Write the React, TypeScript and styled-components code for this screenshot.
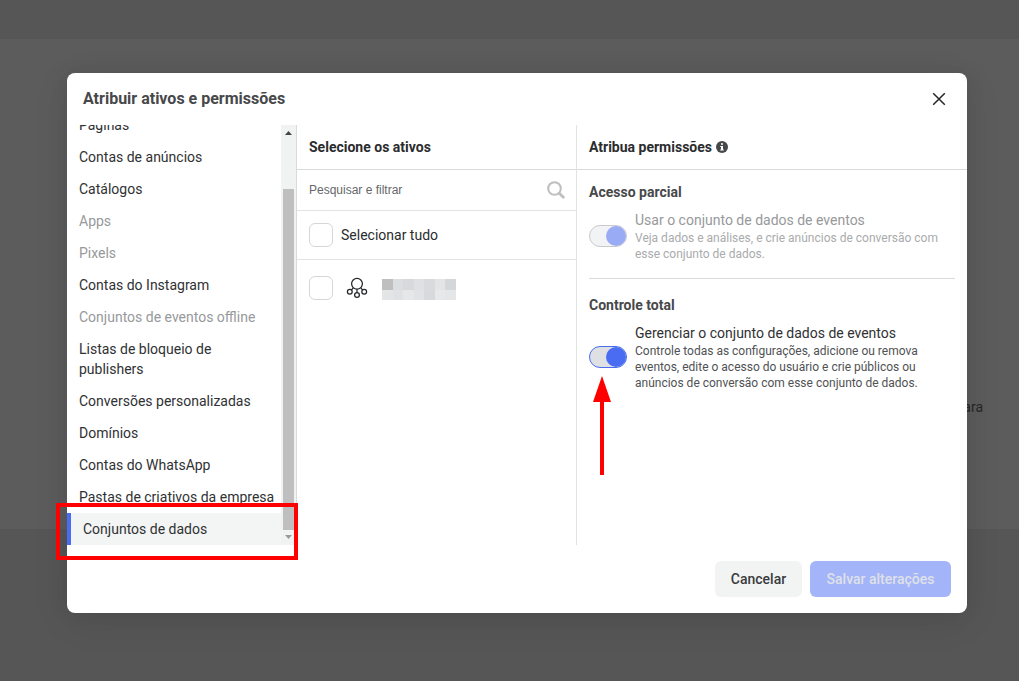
import React from 'react';
import styled, { createGlobalStyle } from 'styled-components';

const GlobalStyle = createGlobalStyle`
  *, *::before, *::after { box-sizing: border-box; }
  body {
    margin: 0;
    font-family: Roboto, "Liberation Sans", sans-serif;
    font-size: 14px;
    line-height: 20px;
    color: #2b2c2e;
    overflow: hidden;
  }
  h1, h2, h3, p, ul { margin: 0; padding: 0; }
`;

const Page = styled.div`
  position: relative;
  height: 681px;
  display: flex;
  flex-direction: column;
  background: #565656;
`;

const Backdrop = styled.div`
  margin-top: 39px;
  height: 490px;
  padding: 358px 36px 0 0;
  background: #5c5c5c;
  color: #262626;
  text-align: right;
`;

const Modal = styled.section`
  position: absolute;
  left: 67px;
  top: 73px;
  width: 900px;
  height: 540px;
  display: flex;
  flex-direction: column;
  background: #fff;
  border-radius: 8px;
  box-shadow: 0 8px 40px rgba(0, 0, 0, 0.07), 0 2px 20px rgba(0, 0, 0, 0.07);
`;

const ModalHeader = styled.header`
  height: 52px;
  flex: none;
  display: flex;
  align-items: center;
  justify-content: space-between;
  padding: 0 21px 0 16px;
`;

const Title = styled.h1`
  font-size: 16px;
  line-height: 20px;
  font-weight: 700;
  color: #47484a;
`;

const IconButton = styled.button`
  display: flex;
  padding: 0;
  border: 0;
  background: none;
`;

const Columns = styled.div`
  display: flex;
  height: 420px;
  flex: none;
`;

const Sidebar = styled.nav`
  width: 230px;
  border-right: 1px solid #d9dadd;
  display: flex;
  overflow: hidden;
`;

const AssetList = styled.ul`
  width: 214px;
  height: 420px;
  display: flex;
  flex-direction: column;
  justify-content: flex-end;
  list-style: none;
`;

const AssetItem = styled.li<{ $muted?: boolean; $active?: boolean }>`
  flex: none;
  padding: 6px 0 6px 12px;
  border-left: ${p => (p.$active ? '4px solid #4a6cf2' : '0')};
  background: ${p => (p.$active ? '#f3f5f5' : 'transparent')};
  color: ${p => (p.$muted ? '#97999b' : '#303133')};
  white-space: pre;
`;

const Scrollbar = styled.div`
  width: 15px;
  display: flex;
  flex-direction: column;
  align-items: center;
  justify-content: space-between;
  background: #f1f3f3;
`;

const ScrollArrow = styled.svg`
  display: block;
  width: 15px;
  height: 15px;
  flex: none;
`;

const ScrollThumb = styled.div`
  width: 11px;
  height: 341px;
  margin-top: auto;
  background: #bfbfbf;
`;

const Assets = styled.section`
  width: 280px;
  border-right: 1px solid #e2e3e5;
`;

const ColumnHeader = styled.div`
  height: 45px;
  padding: 0 12px;
  display: flex;
  align-items: center;
  gap: 4px;
  border-bottom: 1px solid #d9dadd;
`;

const Heading = styled.h2`
  font-size: 14px;
  line-height: 20px;
  font-weight: 700;
`;

const SearchBar = styled.div`
  height: 41px;
  padding: 0 11px 0 12px;
  display: flex;
  align-items: center;
  justify-content: space-between;
  border-bottom: 1px solid #e2e3e5;
  font: 12px/16px "Liberation Sans", Arial, sans-serif;
  color: #65676a;
`;

const AssetRow = styled.div<{ $height: number; $divided?: boolean }>`
  height: ${p => p.$height}px;
  padding: 0 12px;
  display: flex;
  align-items: center;
  gap: 8px;
  border-bottom: ${p => (p.$divided ? '1px solid #e2e3e5' : '0')};
`;

const Checkbox = styled.span`
  width: 24px;
  height: 24px;
  border: 1px solid #d5d6d9;
  border-radius: 6px;
  background: #fff;
`;

const DatasetIcon = styled.svg`
  width: 22px;
  height: 22px;
  margin-left: 5px;
`;

const Mosaic = styled.div`
  display: grid;
  grid-template-columns: repeat(7, 1fr);
  width: 74px;
  height: 21px;
  margin: 3px 0 0 6px;
`;

const MosaicCell = styled.span<{ $color: string }>`
  background: ${p => p.$color};
`;

const Permissions = styled.section`
  width: 390px;
`;

const PermissionGroup = styled.div<{ $divided?: boolean }>`
  margin: 0 12px;
  padding-top: ${p => (p.$divided ? 12 : 16)}px;
  height: ${p => (p.$divided ? 109 : 120)}px;
  border-bottom: ${p => (p.$divided ? '1px solid #d9dadd' : '0')};
`;

const GroupTitle = styled.h3`
  font-size: 14px;
  line-height: 20px;
  font-weight: 700;
  color: #47484a;
`;

const Permission = styled.div<{ $disabled?: boolean }>`
  display: flex;
  align-items: center;
  gap: 8px;
  margin-top: 8px;
  color: ${p => (p.$disabled ? '#97999b' : '#303133')};
`;

const PermissionText = styled.div`
  white-space: nowrap;
`;

const PermissionName = styled.p`
  line-height: 20px;
`;

const Description = styled.p<{ $disabled?: boolean }>`
  font-size: 12px;
  line-height: 16px;
  color: ${p => (p.$disabled ? '#a9abad' : '#505254')};
`;

const Toggle = styled.span<{ $disabled?: boolean }>`
  width: 38px;
  height: 22px;
  flex: none;
  display: flex;
  justify-content: flex-end;
  border: 1px solid ${p => (p.$disabled ? '#c9cacd' : '#4a6cf2')};
  border-radius: 11px;
  background: ${p => (p.$disabled ? '#f2f3f4' : '#dfe0e3')};

  &::after {
    content: '';
    width: 20px;
    height: 20px;
    border-radius: 50%;
    background: ${p => (p.$disabled ? '#98abf4' : '#4a6cf2')};
  }
`;

const Footer = styled.footer`
  padding: 16px;
  display: flex;
  justify-content: flex-end;
  gap: 8px;
`;

const Button = styled.button<{ $primary?: boolean }>`
  width: ${p => (p.$primary ? 141 : 87)}px;
  height: 36px;
  padding: 0;
  border: 0;
  border-radius: 6px;
  font: 500 14px/20px Roboto, sans-serif;
  color: ${p => (p.$primary ? '#dfe1e8' : '#3a3b3d')};
  background: ${p => (p.$primary ? '#a3b4f9' : '#f2f4f4')};
`;

const Highlight = styled.div`
  position: absolute;
  left: 56px;
  top: 503px;
  width: 242px;
  height: 57px;
  border: 4px solid #f00;
`;

const Pointer = styled.svg`
  position: absolute;
  left: 592px;
  top: 376px;
`;

const items = [
  { label: 'Páginas' },
  { label: 'Contas de anúncios' },
  { label: 'Catálogos' },
  { label: 'Apps', muted: true },
  { label: 'Pixels', muted: true },
  { label: 'Contas do Instagram' },
  { label: 'Conjuntos de eventos offline', muted: true },
  { label: 'Listas de bloqueio de\npublishers' },
  { label: 'Conversões personalizadas' },
  { label: 'Domínios' },
  { label: 'Contas do WhatsApp' },
  { label: 'Pastas de criativos da empresa' },
  { label: 'Conjuntos de dados', active: true },
];

const mosaic = [
  '#bfbfbf', '#dcdde1', '#d7d9dd', '#dfe0e3', '#d8dade', '#e3e4e6', '#d4d6da',
  '#e4e5e7', '#dfe1e4', '#e6e7e9', '#e1e2e5', '#d7d9dd', '#e7e8ea', '#e5e6e8',
];

export default function App() {
  return (
    <>
      <GlobalStyle />
      <Page>
        <Backdrop>ara</Backdrop>
        <Modal>
          <ModalHeader>
            <Title>Atribuir ativos e permissões</Title>
            <IconButton aria-label="Fechar">
              <svg width="14" height="14" viewBox="0 0 14 14" fill="none" stroke="#252628" strokeWidth="1.5">
                <path d="M1.2 1.2l11.6 11.6M12.8 1.2L1.2 12.8" />
              </svg>
            </IconButton>
          </ModalHeader>
          <Columns>
            <Sidebar>
              <AssetList>
                {items.map(item => (
                  <AssetItem key={item.label} $muted={item.muted} $active={item.active}>
                    {item.label}
                  </AssetItem>
                ))}
              </AssetList>
              <Scrollbar>
                <ScrollArrow viewBox="0 0 15 15">
                  <path d="M4 10L7.5 6L11 10z" fill="#454545" />
                </ScrollArrow>
                <ScrollThumb />
                <ScrollArrow viewBox="0 0 15 15">
                  <path d="M4 5L7.5 9L11 5z" fill="#9a9a9a" />
                </ScrollArrow>
              </Scrollbar>
            </Sidebar>
            <Assets>
              <ColumnHeader>
                <Heading>Selecione os ativos</Heading>
              </ColumnHeader>
              <SearchBar>
                <span>Pesquisar e filtrar</span>
                <svg width="18" height="18" viewBox="0 0 18 18" fill="none" stroke="#bebfc1">
                  <circle cx="7.5" cy="7.5" r="6.3" strokeWidth="2.1" />
                  <path d="M12.3 12.3l4 4" strokeWidth="2.8" strokeLinecap="round" />
                </svg>
              </SearchBar>
              <AssetRow $height={49} $divided>
                <Checkbox />
                <span>Selecionar tudo</span>
              </AssetRow>
              <AssetRow $height={56}>
                <Checkbox />
                <DatasetIcon viewBox="0 0 22 22" fill="none" stroke="#252628" strokeWidth="1.25">
                  <circle cx="11" cy="6.8" r="5.4" />
                  <circle cx="3.8" cy="14.8" r="2.4" />
                  <circle cx="18.2" cy="14.8" r="2.4" />
                  <circle cx="11" cy="18" r="2.4" />
                  <path d="M11 12.2v3.4M7.2 10.8l-1.7 2.1M14.8 10.8l1.7 2.1" />
                </DatasetIcon>
                <Mosaic>
                  {mosaic.map((color, i) => (
                    <MosaicCell key={i} $color={color} />
                  ))}
                </Mosaic>
              </AssetRow>
            </Assets>
            <Permissions>
              <ColumnHeader>
                <Heading>Atribua permissões</Heading>
                <svg width="12" height="12" viewBox="0 0 12 12">
                  <circle cx="6" cy="6" r="6" fill="#47484a" />
                  <path d="M5 2.2h2v1.6H5zM4.3 4.9H7v3.5h.8v1.2H4.2V8.4H5V6.1h-.7z" fill="#fff" />
                </svg>
              </ColumnHeader>
              <PermissionGroup $divided>
                <GroupTitle>Acesso parcial</GroupTitle>
                <Permission $disabled>
                  <Toggle $disabled />
                  <PermissionText>
                    <PermissionName>Usar o conjunto de dados de eventos</PermissionName>
                    <Description $disabled>
                      Veja dados e análises, e crie anúncios de conversão com
                      <br />
                      esse conjunto de dados.
                    </Description>
                  </PermissionText>
                </Permission>
              </PermissionGroup>
              <PermissionGroup>
                <GroupTitle>Controle total</GroupTitle>
                <Permission>
                  <Toggle />
                  <PermissionText>
                    <PermissionName>Gerenciar o conjunto de dados de eventos</PermissionName>
                    <Description>
                      Controle todas as configurações, adicione ou remova
                      <br />
                      eventos, edite o acesso do usuário e crie públicos ou
                      <br />
                      anúncios de conversão com esse conjunto de dados.
                    </Description>
                  </PermissionText>
                </Permission>
              </PermissionGroup>
            </Permissions>
          </Columns>
          <Footer>
            <Button>Cancelar</Button>
            <Button $primary>Salvar alterações</Button>
          </Footer>
        </Modal>
        <Highlight />
        <Pointer width="20" height="99" viewBox="0 0 20 99">
          <path d="M10 0L19 26H12V99H8V26H1z" fill="#f00" />
        </Pointer>
      </Page>
    </>
  );
}
